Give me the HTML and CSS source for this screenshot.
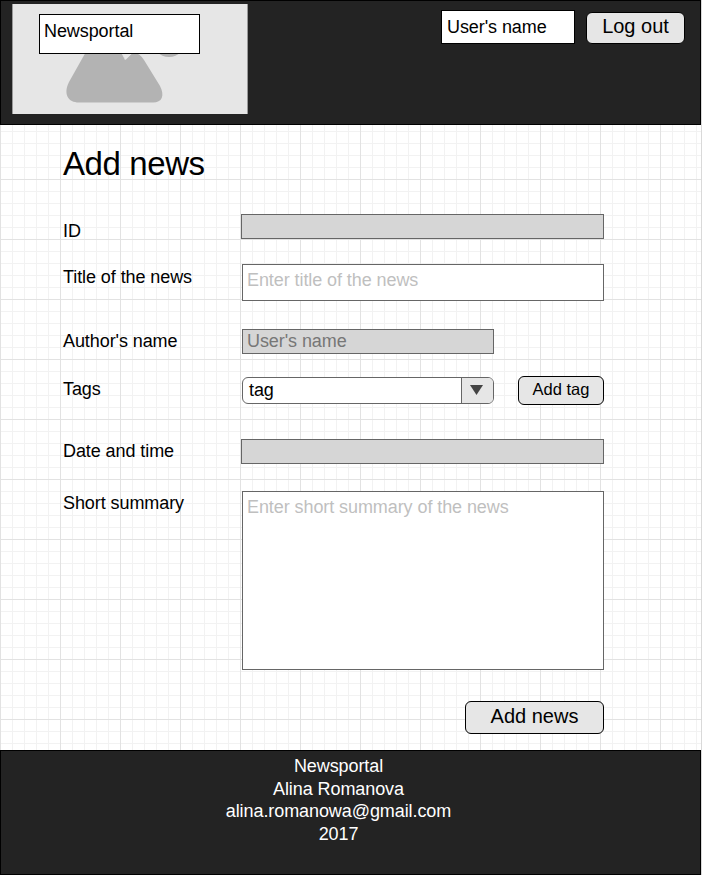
FILE: index.html
```html
<!DOCTYPE html>
<html lang="en">
<head>
<meta charset="utf-8">
<title>Newsportal</title>
<link rel="stylesheet" href="styles.css">
</head>
<body>
<div class="page">
  <header class="header">
    <div class="logo">
      <svg class="logo-art" width="234" height="110" viewBox="0 0 234 110" aria-hidden="true">
        <path fill="#b3b3b3" d="M74 46 L56 78 C50 90 55 98.500 66 98.500 H140 C149 98.500 152 92 147 82 L131 56 Q122 42 112 56 L107 46 Z"/>
        <path fill="#b3b3b3" d="M109 49 L112.500 56 L116 52 Z"/>
        <path fill="#e6e6e6" d="M108.500 49 L112.500 56 L118 50.500 L120 48 Z"/>
        <circle cx="156" cy="36" r="17" fill="#b3b3b3"/>
      </svg>
      <div class="brand">Newsportal</div>
    </div>
    <div class="user">User's name</div>
    <button class="btn logout">Log out</button>
  </header>
  <main class="main">
    <h1 class="title">Add news</h1>
    <div class="row row-id"><label class="label">ID</label><div class="field off wide"></div></div>
    <div class="row row-title"><label class="label">Title of the news</label><div class="field hint">Enter title of the news</div></div>
    <div class="row row-author"><label class="label">Author's name</label><div class="field off short">User's name</div></div>
    <div class="row row-tags">
      <label class="label">Tags</label>
      <div class="select"><span class="value">tag</span><span class="toggle"><svg width="13" height="10" viewBox="0 0 13 10"><path fill="#444" d="M0 0H13L6.500 10Z"/></svg></span></div>
      <button class="btn add-tag">Add tag</button>
    </div>
    <div class="row row-date"><label class="label">Date and time</label><div class="field off wide"></div></div>
    <div class="row row-summary"><label class="label">Short summary</label><div class="field hint">Enter short summary of the news</div></div>
    <button class="btn submit">Add news</button>
  </main>
  <footer class="footer">
    <div>Newsportal</div>
    <div>Alina Romanova</div>
    <div>alina.romanowa@gmail.com</div>
    <div>2017</div>
  </footer>
</div>
</body>
</html>
```
FILE: styles.css
```css
* { box-sizing: border-box; }
body {
  margin: 0;
  background: #d9d9d9;
  font: 18px/20px "Liberation Sans", Arial, sans-serif;
  letter-spacing: -0.08px;
  color: #000;
}
.page {
  width: 701px;
  height: 875px;
  display: flex;
  flex-direction: column;
  background-color: #fff;
  background-image:
    linear-gradient(90deg, #e2e2e2 1px, transparent 1px),
    linear-gradient(#e2e2e2 1px, transparent 1px),
    linear-gradient(90deg, #f2f2f2 1px, transparent 1px),
    linear-gradient(#f2f2f2 1px, transparent 1px);
  background-size: 60px 60px, 60px 60px, 12px 12px, 12px 12px;
  background-position: 0 0, 0 59px, 0 0, 0 11px;
}
.header {
  height: 125px;
  display: flex;
  align-items: flex-start;
  padding: 3px 15px 0 11px;
  background: #232323;
  border: 1px solid #000;
}
.logo {
  position: relative;
  width: 236px;
  height: 110px;
  background: #e6e6e6;
  border: solid #999;
  border-width: 0 1px;
}
.logo-art { display: block; }
.brand {
  position: absolute;
  left: 26px;
  top: 10px;
  width: 161px;
  height: 40px;
  padding: 6px 4px;
  background: #fff;
  border: 1px solid #000;
}
.user {
  width: 134px;
  height: 34px;
  margin: 6px 11px 0 auto;
  padding: 6px 5px;
  background: #fff;
  border: 1px solid #000;
}
.btn {
  display: block;
  padding: 0;
  background: #e6e6e6;
  border: 1px solid #000;
  border-radius: 6px;
  color: #000;
  font: 20px/22px "Liberation Sans", Arial, sans-serif;
  text-align: center;
}
.logout {
  width: 99px;
  height: 32px;
  margin-top: 8px;
  padding-bottom: 4px;
}
.main {
  height: 625px;
  padding: 20px 97px 0 63px;
}
.title {
  margin: 0;
  height: 69px;
  font-weight: 400;
  font-size: 33px;
  line-height: 38px;
  letter-spacing: -0.4px;
}
.row {
  display: flex;
  align-items: flex-start;
  width: 541px;
}
.label { width: 179px; flex: none; padding-top: 2px; }
.field {
  flex: 1;
  height: 100%;
  padding: 1px 4px;
  background: #fff;
  border: 1px solid #666;
}
.wide { margin-left: -1px; }
.off { background: #d6d6d6; color: #777; }
.short { flex: none; width: 252px; }
.hint { color: #bfbfbf; padding-top: 5px; }
.row-id { height: 25px; margin-bottom: 25px; }
.row-id .label { padding-top: 7px; }
.row-title { height: 37px; margin-bottom: 28px; }
.row-title .label { padding-top: 3px; }
.row-author { height: 25px; margin-bottom: 22px; }
.row-tags { height: 28px; margin-bottom: 35px; }
.row-tags .label { padding-top: 3px; }
.row-date { height: 25px; margin-bottom: 27px; }
.row-summary { height: 179px; margin-bottom: 31px; }
.select {
  display: flex;
  width: 252px;
  height: 27px;
  margin-top: 1px;
  border: 1px solid #666;
  border-radius: 6px;
  background: #fff;
  overflow: hidden;
}
.value { flex: 1; padding: 2px 6px; }
.toggle {
  width: 32px;
  display: flex;
  align-items: center;
  justify-content: center;
  padding: 0 2px 2px 0;
  background: #e6e6e6;
  border-left: 1px solid #666;
}
.add-tag {
  width: 86px;
  height: 29px;
  margin-left: 24px;
  padding-bottom: 3px;
  font-size: 16.5px;
}
.submit {
  width: 139px;
  height: 33px;
  margin-left: 402px;
  padding-bottom: 4px;
}
.footer {
  height: 125px;
  padding: 4px 24px 0 0;
  background: #232323;
  border: 1px solid #000;
  color: #fff;
  font-size: 18px;
  line-height: 22.6px;
  text-align: center;
}
```
